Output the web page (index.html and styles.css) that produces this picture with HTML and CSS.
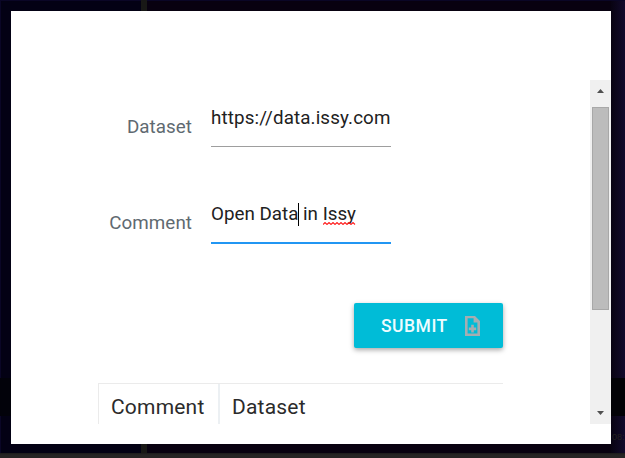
FILE: index.html
```html
<!DOCTYPE html>
<html lang="en">
<head>
<meta charset="utf-8">
<title>Dataset submission</title>
<link rel="stylesheet" href="styles.css">
</head>
<body>
<main class="desktop">
  <span class="clock">08:</span>
  <section class="dialog">
    <div class="scroll-area">
      <div class="content">
        <form class="form">
          <div class="field">
            <label class="label">Dataset</label>
            <div class="input url">https://data.issy.com</div>
          </div>
          <div class="field">
            <label class="label">Comment</label>
            <div class="input focused">Open Data<i class="caret"></i> in <span class="misspelled">Issy<svg class="squiggle" width="33" height="3" viewBox="0 0 33 3"><path d="M0 2.5L2 .5L4 2.5L6 .5L8 2.5L10 .5L12 2.5L14 .5L16 2.5L18 .5L20 2.5L22 .5L24 2.5L26 .5L28 2.5L30 .5L32 2.5" fill="none" stroke="#f22" stroke-width="1.1"/></svg></span></div>
          </div>
          <button class="submit" type="button">
            <span class="submit-text">SUBMIT</span>
            <svg class="icon" width="15" height="20" viewBox="0 0 15 20"><path fill="#a5adb1" fill-rule="evenodd" d="M0 0H10L15 5V20H0ZM2.6 2.2V17.6H12.4V6.5H8.6V2.2ZM6.2 8.8H8.8V11.5H11.2V14.3H8.8V16.5H6.2V14.3H3.8V11.5H6.2Z"/></svg>
          </button>
        </form>
        <div class="table">
          <div class="cell">Comment</div>
          <div class="cell">Dataset</div>
        </div>
      </div>
      <div class="scrollbar">
        <svg class="arrow" width="7" height="4" viewBox="0 0 7 4"><path d="M3.5 0L7 4H0Z" fill="#505050"/></svg>
        <div class="thumb"></div>
        <svg class="arrow down" width="7" height="4" viewBox="0 0 7 4"><path d="M0 0H7L3.5 4Z" fill="#505050"/></svg>
      </div>
    </div>
  </section>
</main>
</body>
</html>
```
FILE: styles.css
```css
* { box-sizing: border-box; }
body { margin: 0; overflow: hidden; font-family: Roboto, sans-serif; }
.desktop {
  position: relative;
  width: 625px;
  height: 458px;
  padding: 11px 14px 14px 11px;
  background:
    linear-gradient(#1b1a1a, #272525 2px) 0 453px / 100% 5px no-repeat,
    linear-gradient(#02020a, #02020a) 0 378px / 11px 38px no-repeat,
    linear-gradient(#020206, #020206) 611px 378px / 14px 38px no-repeat,
    linear-gradient(#181816, #181816) 141px 0 / 6px 453px no-repeat,
    linear-gradient(#0a0626, #0a0626) 0 0 / 100% 1px no-repeat,
    linear-gradient(#0a0626, #0a0626) 0 0 / 1px 453px no-repeat,
    linear-gradient(90deg, #080312, #120a2c) 611px 0 / 14px 453px no-repeat,
    linear-gradient(90deg, #030114 144px, #080110 144px);
}
.clock {
  position: absolute;
  left: 612px;
  top: 432px;
  font: 9px/11px "Liberation Sans", sans-serif;
  color: #24221f;
}
.dialog {
  position: relative;
  width: 600px;
  height: 433px;
  padding: 69px 0 20px;
  background: #fff;
}
.scroll-area {
  display: flex;
  justify-content: space-between;
  height: 344px;
  overflow: hidden;
}
.content { width: 405px; margin-left: 87px; }
.form { display: flex; flex-direction: column; }
.field {
  display: grid;
  grid-template-columns: 94px 180px;
  column-gap: 19px;
  height: 67px;
  margin-bottom: 29px;
}
.label {
  padding-top: 37px;
  text-align: right;
  font-size: 18.8px;
  line-height: 21px;
  letter-spacing: .05px;
  color: #5f6a71;
}
.input {
  height: 67px;
  padding-top: 28px;
  border-bottom: 1px solid #9e9e9e;
  font-size: 18.8px;
  line-height: 21px;
  white-space: nowrap;
  color: #212121;
}
.url { letter-spacing: .13px; }
.focused { height: 68px; border-bottom: 2px solid #2196f3; }
.caret {
  display: inline-block;
  width: 1px;
  height: 23px;
  margin: -3px -1px -6px 0;
  vertical-align: baseline;
  background: #000;
}
.misspelled { position: relative; }
.squiggle { position: absolute; left: 0; bottom: 0; }
.submit {
  display: flex;
  align-items: center;
  align-self: flex-end;
  width: 149px;
  height: 45px;
  margin: 31px 0 35px;
  padding: 0 23px 0 27px;
  justify-content: space-between;
  border: 0;
  border-radius: 2px;
  background: #00bcd7;
  box-shadow: 0 2px 5px rgba(0, 0, 0, .35);
  font: 500 17.5px/20px Roboto, sans-serif;
  letter-spacing: .5px;
  color: #eefcff;
}
.table {
  display: grid;
  grid-template-columns: 120px 1fr;
  height: 80px;
  border-top: 1px solid #ebebeb;
}
.cell {
  padding: 11px 0 0 12px;
  border-left: 1px solid #ebebeb;
  font-size: 21px;
  line-height: 24px;
  letter-spacing: .2px;
  color: #2b2b2b;
}
.cell + .cell { border-left: 2px solid #ecf0f3; }
.scrollbar {
  display: flex;
  flex-direction: column;
  align-items: center;
  width: 21px;
  padding: 9px 0;
  background: #f0f0f0;
}
.thumb {
  width: 17px;
  height: 203px;
  margin-top: 14px;
  border: 1px solid #a8a8a8;
  background: #bcbcbc;
}
.down { margin-top: auto; }
```
